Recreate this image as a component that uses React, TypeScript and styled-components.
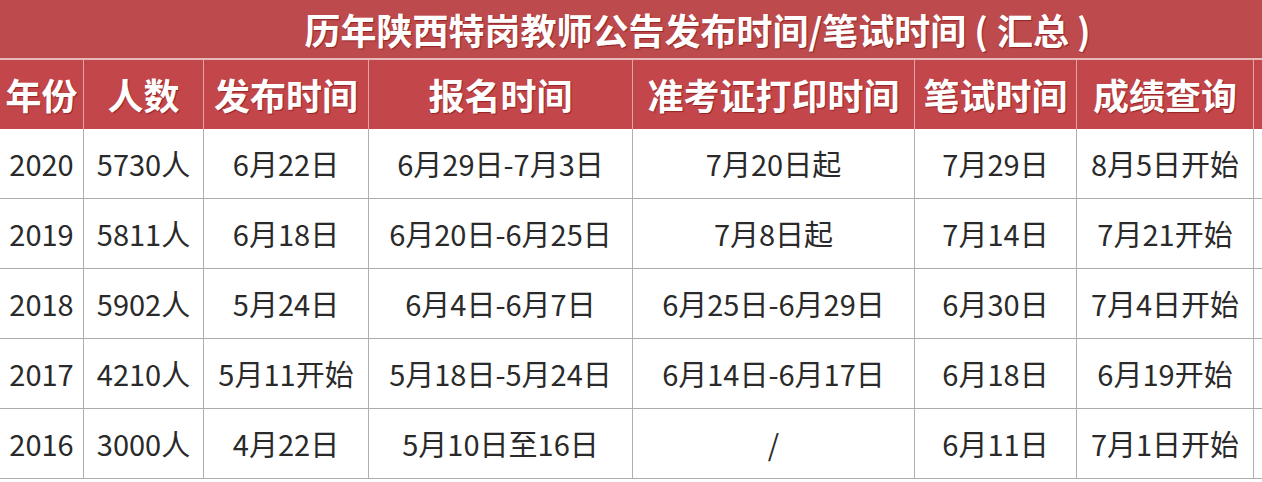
import React from "react";
import styled, { createGlobalStyle } from "styled-components";

const GlobalStyle = createGlobalStyle`
  html, body { margin: 0; padding: 0; background: #ffffff; }
  body { overflow: hidden; font-family: "Noto Sans CJK SC", "Noto Sans", sans-serif; }
`;

const COLS = "84px 120px 165px 264px 282px 162px 177px 150px";

const Viewport = styled.div`
  width: 1262px;
  height: 482px;
  overflow: hidden;
  background: #ffffff;
`;

const Table = styled.div`
  width: 1404px;
  display: flex;
  flex-direction: column;
`;

const TitleBar = styled.div`
  height: 60px;
  background: #bd4a4c;
  border-bottom: 2px solid #e6b9b9;
  display: flex;
  align-items: center;
  justify-content: center;
  color: #ffffff;
  font-family: "Noto Sans CJK SC", sans-serif;
  font-weight: 700;
  font-size: 36px;
  line-height: 1;
  text-shadow: 1px 1px 1px rgba(110, 10, 10, 0.55);
  padding-bottom: 1px;
  box-sizing: border-box;
  white-space: nowrap;
`;

const Paren = styled.span`
  display: inline-block;
  margin: 0 9px 0 8px;
`;

const Row = styled.div<{ $head?: boolean }>`
  display: grid;
  grid-template-columns: ${COLS};
  height: ${(p) => (p.$head ? "69px" : "70px")};
  box-sizing: border-box;
  background: ${(p) => (p.$head ? "#c3464a" : "#ffffff")};
  border-bottom: ${(p) => (p.$head ? "none" : "1px solid #ababab")};
`;

const HeadCell = styled.div`
  display: flex;
  align-items: center;
  justify-content: center;
  border-right: 1px solid #e2a4a5;
  color: #ffffff;
  font-family: "Noto Sans CJK SC", sans-serif;
  font-weight: 700;
  font-size: 36px;
  line-height: 1;
  text-shadow: 1px 1px 1px rgba(110, 10, 10, 0.55);
  padding-bottom: 2px;
  white-space: nowrap;
`;

const Cell = styled.div`
  display: flex;
  align-items: center;
  justify-content: center;
  border-right: 1px solid #b0b0b0;
  color: #2a2a2a;
  font-family: "Noto Sans CJK SC", sans-serif;
  font-weight: 400;
  font-size: 29px;
  line-height: 1;
  white-space: nowrap;
`;

const headers = ["年份", "人数", "发布时间", "报名时间", "准考证打印时间", "笔试时间", "成绩查询", ""];

const rows: string[][] = [
  ["2020", "5730人", "6月22日", "6月29日-7月3日", "7月20日起", "7月29日", "8月5日开始", ""],
  ["2019", "5811人", "6月18日", "6月20日-6月25日", "7月8日起", "7月14日", "7月21开始", ""],
  ["2018", "5902人", "5月24日", "6月4日-6月7日", "6月25日-6月29日", "6月30日", "7月4日开始", ""],
  ["2017", "4210人", "5月11开始", "5月18日-5月24日", "6月14日-6月17日", "6月18日", "6月19开始", ""],
  ["2016", "3000人", "4月22日", "5月10日至16日", "/", "6月11日", "7月1日开始", ""],
];

export default function App() {
  return (
    <>
      <GlobalStyle />
      <Viewport>
        <Table>
          <TitleBar>
            历年陕西特岗教师公告发布时间/笔试时间
            <Paren>(</Paren>
            汇总
            <Paren>)</Paren>
          </TitleBar>
          <Row $head>
            {headers.map((h, i) => (
              <HeadCell key={i}>{h}</HeadCell>
            ))}
          </Row>
          {rows.map((r, ri) => (
            <Row key={ri}>
              {r.map((c, ci) => (
                <Cell key={ci}>{c}</Cell>
              ))}
            </Row>
          ))}
        </Table>
      </Viewport>
    </>
  );
}
